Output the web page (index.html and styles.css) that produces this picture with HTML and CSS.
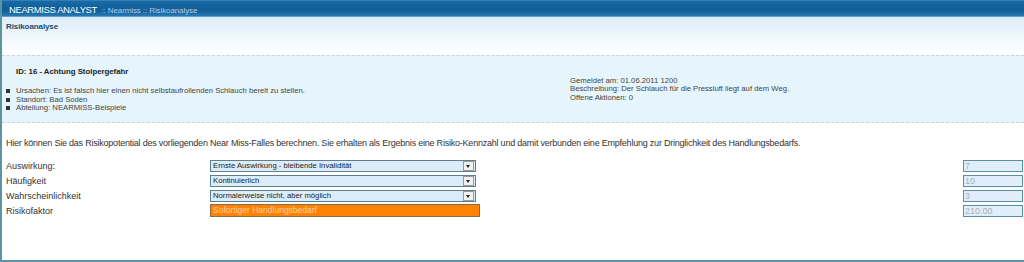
FILE: index.html
```html
<!DOCTYPE html>
<html lang="de">
<head>
    <meta charset="UTF-8">
    <title>NEARMISS ANALYST :: Risikoanalyse</title>
    <link rel="stylesheet" href="styles.css">
</head>
<body>
    <div class="page">
        <div class="topbar">
            <span class="app-name">NEARMISS ANALYST</span>
            <span class="crumbs">:: Nearmiss :: Risikoanalyse</span>
        </div>
        <div class="subhead">Risikoanalyse</div>

        <div class="infobox">
            <div class="info-left">
                <div class="info-title">ID: 16 - Achtung Stolpergefahr</div>
                <ul class="info-list">
                    <li>Ursachen: Es ist falsch hier einen nicht selbstaufrollenden Schlauch bereit zu stellen.</li>
                    <li>Standort: Bad Soden</li>
                    <li>Abteilung: NEARMISS-Beispiele</li>
                </ul>
            </div>
            <div class="info-right">
                <div>Gemeldet am: 01.06.2011 1200</div>
                <div>Beschreibung: Der Schlauch für die Pressluft liegt auf dem Weg.</div>
                <div>Offene Aktionen: 0</div>
            </div>
        </div>

        <p class="intro">Hier können Sie das Risikopotential des vorliegenden Near Miss-Falles berechnen. Sie erhalten als Ergebnis eine Risiko-Kennzahl und damit verbunden eine Empfehlung zur Dringlichkeit des Handlungsbedarfs.</p>

        <div class="calc">
            <div class="row">
                <div class="label">Auswirkung:</div>
                <div class="select"><span>Ernste Auswirkung - bleibende Invalidität</span><i class="arrow"></i></div>
                <div class="value">7</div>
            </div>
            <div class="row">
                <div class="label">Häufigkeit</div>
                <div class="select"><span>Kontinuierlich</span><i class="arrow"></i></div>
                <div class="value">10</div>
            </div>
            <div class="row">
                <div class="label">Wahrscheinlichkeit</div>
                <div class="select"><span>Normalerweise nicht, aber möglich</span><i class="arrow"></i></div>
                <div class="value">3</div>
            </div>
            <div class="row">
                <div class="label">Risikofaktor</div>
                <div class="result">Sofortiger Handlungsbedarf</div>
                <div class="value">210.00</div>
            </div>
        </div>
    </div>
</body>
</html>
```

FILE: styles.css
```css
* {
    margin: 0;
    padding: 0;
    box-sizing: border-box;
}

body {
    font-family: 'Liberation Sans', Arial, sans-serif;
    color: #333;
    background: #fff;
}

.page {
    height: 262px;
    border-left: 2px solid #5e94a2;
    border-bottom: 2px solid #5e94a2;
    overflow: hidden;
}

.topbar {
    height: 17px;
    padding: 2px 0 0 7px;
    background: linear-gradient(#4f93c6 0, #1a6aa6 1px, #0e5d99 10px, #2a78b2 16px, #9ec6e2 17px);
    white-space: nowrap;
    line-height: 12px;
}

.app-name {
    color: #fff;
    font-size: 9.5px;
    letter-spacing: -0.4px;
}

.crumbs {
    color: #a9cfea;
    font-size: 8px;
    letter-spacing: -0.1px;
}

.subhead {
    height: 38px;
    padding: 5px 0 0 4px;
    background: linear-gradient(#dcecf8, #f3f9fd 60%, #fff);
    color: #1d4c70;
    font-size: 8px;
    font-weight: bold;
    letter-spacing: -0.1px;
}

.infobox {
    height: 68px;
    display: flex;
    background: #e6f4fc;
    border-top: 1px dashed #c8d5dc;
    border-bottom: 1px dashed #c8d5dc;
    font-size: 7.7px;
    color: #444;
    line-height: 8.3px;
}

.info-left {
    width: 568px;
    padding: 12px 0 0 4px;
}

.info-title {
    padding-left: 10px;
    font-size: 7.8px;
    font-weight: bold;
    color: #222;
    margin-bottom: 11px;
}

.info-list {
    list-style: none;
}

.info-list li {
    position: relative;
    padding-left: 10px;
}

.info-list li::before {
    content: '';
    position: absolute;
    left: 0;
    top: 2px;
    width: 4px;
    height: 4px;
    background: #333;
}

.info-right {
    padding-top: 21px;
}

.intro {
    margin: 15px 0 0 4px;
    font-size: 9px;
    letter-spacing: -0.22px;
    color: #333;
}

.calc {
    margin-top: 10px;
}

.row {
    display: flex;
    align-items: center;
    height: 15px;
    padding-left: 4px;
}

.label {
    width: 204px;
    font-size: 9px;
    color: #333;
}

.select {
    width: 266px;
    height: 12px;
    display: flex;
    align-items: center;
    justify-content: space-between;
    background: #dcedf9;
    border: 1px solid #5d7f92;
    font-size: 7.7px;
    color: #222;
    padding-left: 2px;
}

.arrow {
    width: 11px;
    height: 10px;
    margin-right: 1px;
    background: #f1f1f1;
    border: 1px solid #9a9a9a;
    position: relative;
}

.arrow::after {
    content: '';
    position: absolute;
    left: 2px;
    top: 3px;
    border-left: 2.5px solid transparent;
    border-right: 2.5px solid transparent;
    border-top: 3px solid #222;
}

.result {
    width: 270px;
    height: 13px;
    background: #ff8205;
    border: 1px solid #8c6b48;
    color: #ffd2a0;
    font-size: 8.5px;
    padding-left: 2px;
    line-height: 11px;
}

.value {
    width: 60px;
    height: 12px;
    margin-left: auto;
    margin-right: 1px;
    background: #dfeefa;
    border: 1px solid #5b8ea6;
    color: #a8b2b8;
    font-size: 9px;
    line-height: 10px;
    padding-left: 1px;
}
```
